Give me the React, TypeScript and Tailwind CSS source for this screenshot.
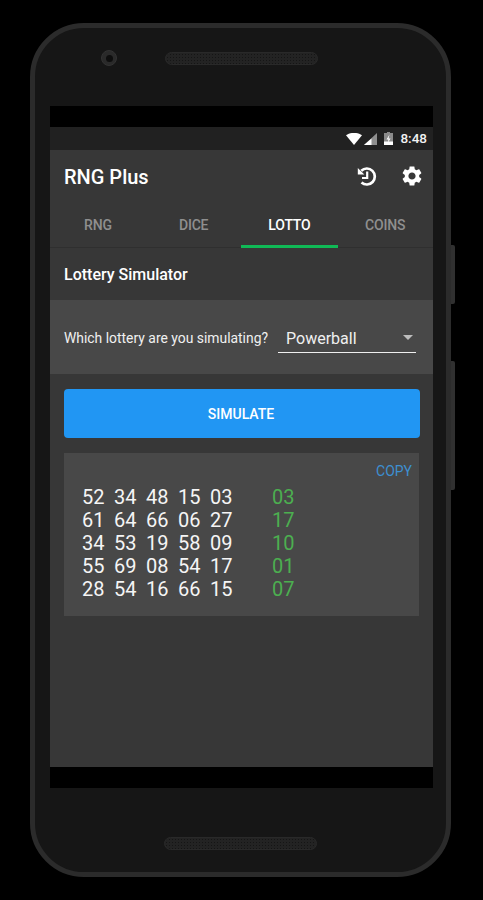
const F = { fontFamily: 'Roboto, "Liberation Sans", sans-serif' };

const rows: [string[], string][] = [
  [["52", "34", "48", "15", "03"], "03"],
  [["61", "64", "66", "06", "27"], "17"],
  [["34", "53", "19", "58", "09"], "10"],
  [["55", "69", "08", "54", "17"], "01"],
  [["28", "54", "16", "66", "15"], "07"],
];

function Speaker() {
  return (
    <div className="w-[153px] h-[13px] rounded-[7px] bg-[#232323] bg-[radial-gradient(#151515_40%,transparent_45%)] bg-[length:3px_3px] border border-[#292929]" />
  );
}

export default function App() {
  return (
    <div className="w-[483px] h-[900px] bg-black overflow-hidden pt-[23px] pl-[30px]" style={F}>
      <div className="relative w-[421px] h-[854px] rounded-[54px] border-[5px] border-[#2b2b2b] bg-[#161616]">
        <div className="absolute left-[416px] top-[217px] w-[4px] h-[59px] bg-[#303030] rounded-r-[2px]" />
        <div className="absolute left-[416px] top-[333px] w-[4px] h-[129px] bg-[#303030] rounded-r-[2px]" />
        <div className="h-[78px] pt-[22px] pl-[66px] flex items-start gap-[48px]">
          <div className="shrink-0 w-[16px] h-[16px] rounded-full bg-[#2a2a2a] border border-[#333333] flex items-center justify-center">
            <div className="w-[7px] h-[7px] rounded-full bg-[#0e0e0e]" />
          </div>
          <div className="mt-[2px]"><Speaker /></div>
        </div>
        <div className="mx-[15px] w-[383px] h-[682px] flex flex-col bg-black">
          <div className="h-[21px] shrink-0 bg-black" />
          <div className="h-[23px] shrink-0 bg-[#212121] flex items-center justify-end pr-[6px]">
            <svg width="16" height="12" viewBox="0 0 16 12"><path d="M0 2.2C4.500-.9 11.500-.9 16 2.200L8 12z" fill="#fff" /></svg>
            <svg width="13" height="12" viewBox="0 0 13 12" className="ml-[2px]">
              <path d="M13 0V12H0z" fill="#8f8f8f" />
              <path d="M7.500 5.500V12H0z" fill="#fff" />
            </svg>
            <svg width="9" height="13" viewBox="0 0 9 13" className="ml-[7px]">
              <path d="M3 0h3v1h3v12H0V1h3z" fill="#8a8a8a" />
              <path d="M0 9.500h9V13H0z" fill="#fff" />
              <path d="M5.500 2.500 2.500 7.500h2l-1 4 3-5h-2z" fill="#fff" />
            </svg>
            <span className="ml-[7px] text-[13.500px] leading-none font-medium text-[#f2f2f2]">8:48</span>
          </div>
          <div className="flex-1 bg-[#373737] flex flex-col">
            <div className="h-[52px] shrink-0 flex items-center pl-[14px] pr-[9px]">
              <span className="text-[20px] font-medium text-white flex-1 pt-[2px]">RNG Plus</span>
              <svg width="24" height="24" viewBox="0 0 24 24" className="mr-[22px]">
                <path d="M7.300 6.700A8 8 0 1 1 7.500 18.500" fill="none" stroke="#fff" strokeWidth="2.700" />
                <path d="M3.800 4V10.500H10.300z" fill="#fff" />
                <path d="M13.200 7.500V14H8" fill="none" stroke="#fff" strokeWidth="2.200" />
              </svg>
              <svg width="24" height="24" viewBox="0 0 24 24" fill="#fff">
                <path d="M19.14 12.94c.04-.3.06-.61.06-.94 0-.32-.02-.64-.07-.94l2.03-1.58c.18-.14.23-.41.12-.61l-1.92-3.32c-.12-.22-.37-.29-.59-.22l-2.39.96c-.5-.38-1.03-.7-1.62-.94l-.36-2.54c-.04-.24-.24-.41-.48-.41h-3.84c-.24 0-.43.17-.47.41l-.36 2.54c-.59.24-1.13.57-1.62.94l-2.39-.96c-.22-.08-.47 0-.59.22L2.74 8.87c-.12.21-.08.47.12.61l2.03 1.58c-.05.3-.09.63-.09.94s.02.64.07.94l-2.03 1.58c-.18.14-.23.41-.12.61l1.92 3.32c.12.22.37.29.59.22l2.39-.96c.5.38 1.03.7 1.62.94l.36 2.54c.05.24.24.41.48.41h3.84c.24 0 .44-.17.47-.41l.36-2.54c.59-.24 1.13-.56 1.62-.94l2.39.96c.22.08.47 0 .59-.22l1.92-3.32c.12-.22.07-.47-.12-.61l-2.01-1.58zM12 15.6c-1.98 0-3.6-1.62-3.6-3.6s1.62-3.6 3.6-3.6 3.6 1.62 3.6 3.6-1.62 3.6-3.6 3.6z" />
              </svg>
            </div>
            <div className="h-[46px] shrink-0 grid grid-cols-4 border-b border-[#2f2f2f] text-[14px] tracking-[-0.2px] font-medium text-[#8f8f8f]">
              <div className="flex items-center justify-center pt-[2px]">RNG</div>
              <div className="flex items-center justify-center pt-[2px]">DICE</div>
              <div className="flex items-center justify-center pt-[3px] text-white border-b-[3px] border-[#10b956] -mb-px -mx-px">LOTTO</div>
              <div className="flex items-center justify-center pt-[2px]">COINS</div>
            </div>
            <div className="h-[52px] shrink-0 flex items-center pl-[14px] pt-[2px] text-[16px] font-medium text-white">Lottery Simulator</div>
            <div className="h-[74px] shrink-0 bg-[#484848] flex items-center pl-[14px] pr-[17px]">
              <span className="text-[13.900px] text-[#f0f0f0] whitespace-nowrap pt-[2px]">Which lottery are you simulating?</span>
              <div className="ml-[10px] flex-1 h-[30px] border-b border-[#f0f0f0] flex items-center justify-between pl-[8px] pr-[3px] mt-[2px]">
                <span className="text-[16px] text-[#f0f0f0] pt-[2px]">Powerball</span>
                <div className="w-0 h-0 border-l-[5px] border-r-[5px] border-t-[5px] border-l-transparent border-r-transparent border-t-[#bdbdbd]" />
              </div>
            </div>
            <div className="flex-1 pl-[14px] pr-[13px] pt-[15px]">
              <button className="w-full h-[49px] rounded-[4px] bg-[#2196f3] text-white text-[14px] font-medium pt-[2px] pr-[2px]">SIMULATE</button>
              <div className="mt-[15px] w-[355px] h-[163px] bg-[#484848] pt-[9px] pl-[18px] pr-[7px]">
                <div className="h-[18px] flex items-center justify-end text-[14px] text-[#3d8fd1]">COPY</div>
                <div className="mt-[6px] flex flex-col text-[20px] leading-[23px]">
                  {rows.map(([nums, extra], i) => (
                    <div key={i} className="flex text-[#f5f5f5]">
                      <div className="w-[158px] grid grid-cols-[32px_32px_32px_32px_30px]">
                        {nums.map((n, j) => <span key={j}>{n}</span>)}
                      </div>
                      <span className="ml-[32px] text-[#4caf50]">{extra}</span>
                    </div>
                  ))}
                </div>
              </div>
            </div>
          </div>
          <div className="h-[21px] shrink-0 bg-black" />
        </div>
        <div className="mt-[49px] flex justify-center"><Speaker /></div>
      </div>
    </div>
  );
}
